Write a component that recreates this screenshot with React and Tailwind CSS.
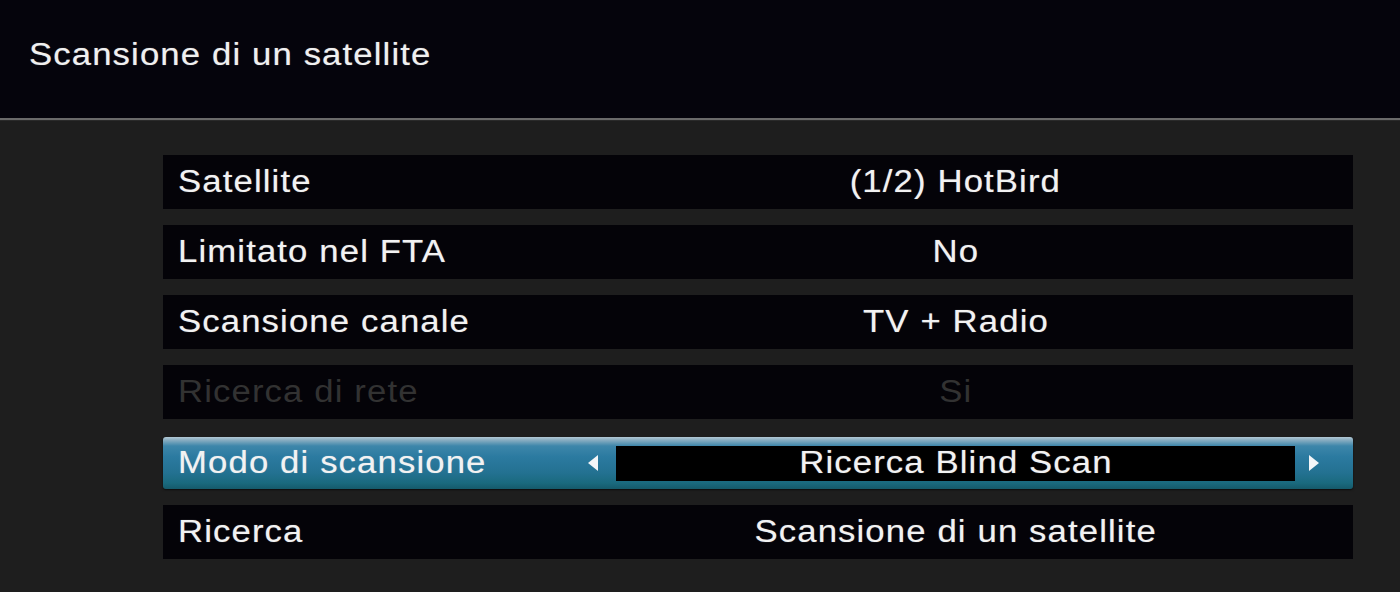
import React from "react";

const rows = [
  { label: "Satellite", value: "(1/2) HotBird" },
  { label: "Limitato nel FTA", value: "No" },
  { label: "Scansione canale", value: "TV + Radio" },
  { label: "Ricerca di rete", value: "Si", disabled: true },
  { label: "Modo di scansione", value: "Ricerca Blind Scan", active: true },
  { label: "Ricerca", value: "Scansione di un satellite" },
];

function Arrow({ dir }) {
  return (
    <svg width="12" height="18" viewBox="0 0 12 18" className="shrink-0">
      {dir === "left" ? (
        <polygon points="11,1 11,17 1,9" fill="#f4f6f8" />
      ) : (
        <polygon points="1,1 1,17 11,9" fill="#f4f6f8" />
      )}
    </svg>
  );
}

function Label({ children, className }) {
  return (
    <span className={`inline-block origin-left scale-x-[1.12] whitespace-nowrap text-[31px] tracking-[1px] ${className}`}>
      {children}
    </span>
  );
}

function Value({ children, className }) {
  return (
    <span className={`inline-block origin-center scale-x-[1.12] whitespace-nowrap text-[31px] tracking-[1px] ${className}`}>
      {children}
    </span>
  );
}

const glow = "[text-shadow:0_0_1px_rgba(255,255,255,0.45)]";

function Row({ label, value, disabled, active }) {
  const text = disabled ? "text-[#323232]" : `text-[#f2f2f2] ${glow}`;
  if (active) {
    return (
      <div className="mt-[2px] flex h-[52px] items-center rounded-[3px] bg-[linear-gradient(to_bottom,#b3c9d5_0px,#8aaec2_3px,#3d86aa_9px,#2b7aa0_20px,#237191_36px,#1a6a7e_46px,#155a6a_52px)] shadow-[0_1px_2px_rgba(0,0,0,0.6)]">
        <div className="w-[417px] pl-[15px]">
          <Label className={text}>{label}</Label>
        </div>
        <div className="flex w-[36px] justify-center pr-[10px]">
          <Arrow dir="left" />
        </div>
        <div className="flex h-[35px] w-[679px] items-center justify-center bg-black">
          <Value className={text}>{value}</Value>
        </div>
        <div className="flex w-[36px] justify-center pl-[2px]">
          <Arrow dir="right" />
        </div>
      </div>
    );
  }
  return (
    <div className="flex h-[54px] items-center bg-[#040308]">
      <div className="w-[417px] pl-[15px]">
        <Label className={text}>{label}</Label>
      </div>
      <div className="flex w-[751px] justify-center">
        <Value className={text}>{value}</Value>
      </div>
    </div>
  );
}

export default function App() {
  return (
    <div
      className="flex h-[592px] w-[1400px] flex-col overflow-hidden bg-[#1e1e1e]"
      style={{ fontFamily: '"Liberation Sans", Arial, sans-serif' }}
    >
      <div className="flex h-[118px] items-center bg-[#05040c] pl-[29px] pb-[8px]">
        <Label className={`text-[#f0f0f0] ${glow}`}>Scansione di un satellite</Label>
      </div>
      <div className="h-[2px] bg-[#6a6a6a]" />
      <div className="h-[1px] bg-[#2a2a2a]" />
      <div className="flex flex-col gap-[16px] pl-[163px] pr-[47px] pt-[34px]">
        {rows.map((r) => (
          <Row key={r.label} {...r} />
        ))}
      </div>
    </div>
  );
}
